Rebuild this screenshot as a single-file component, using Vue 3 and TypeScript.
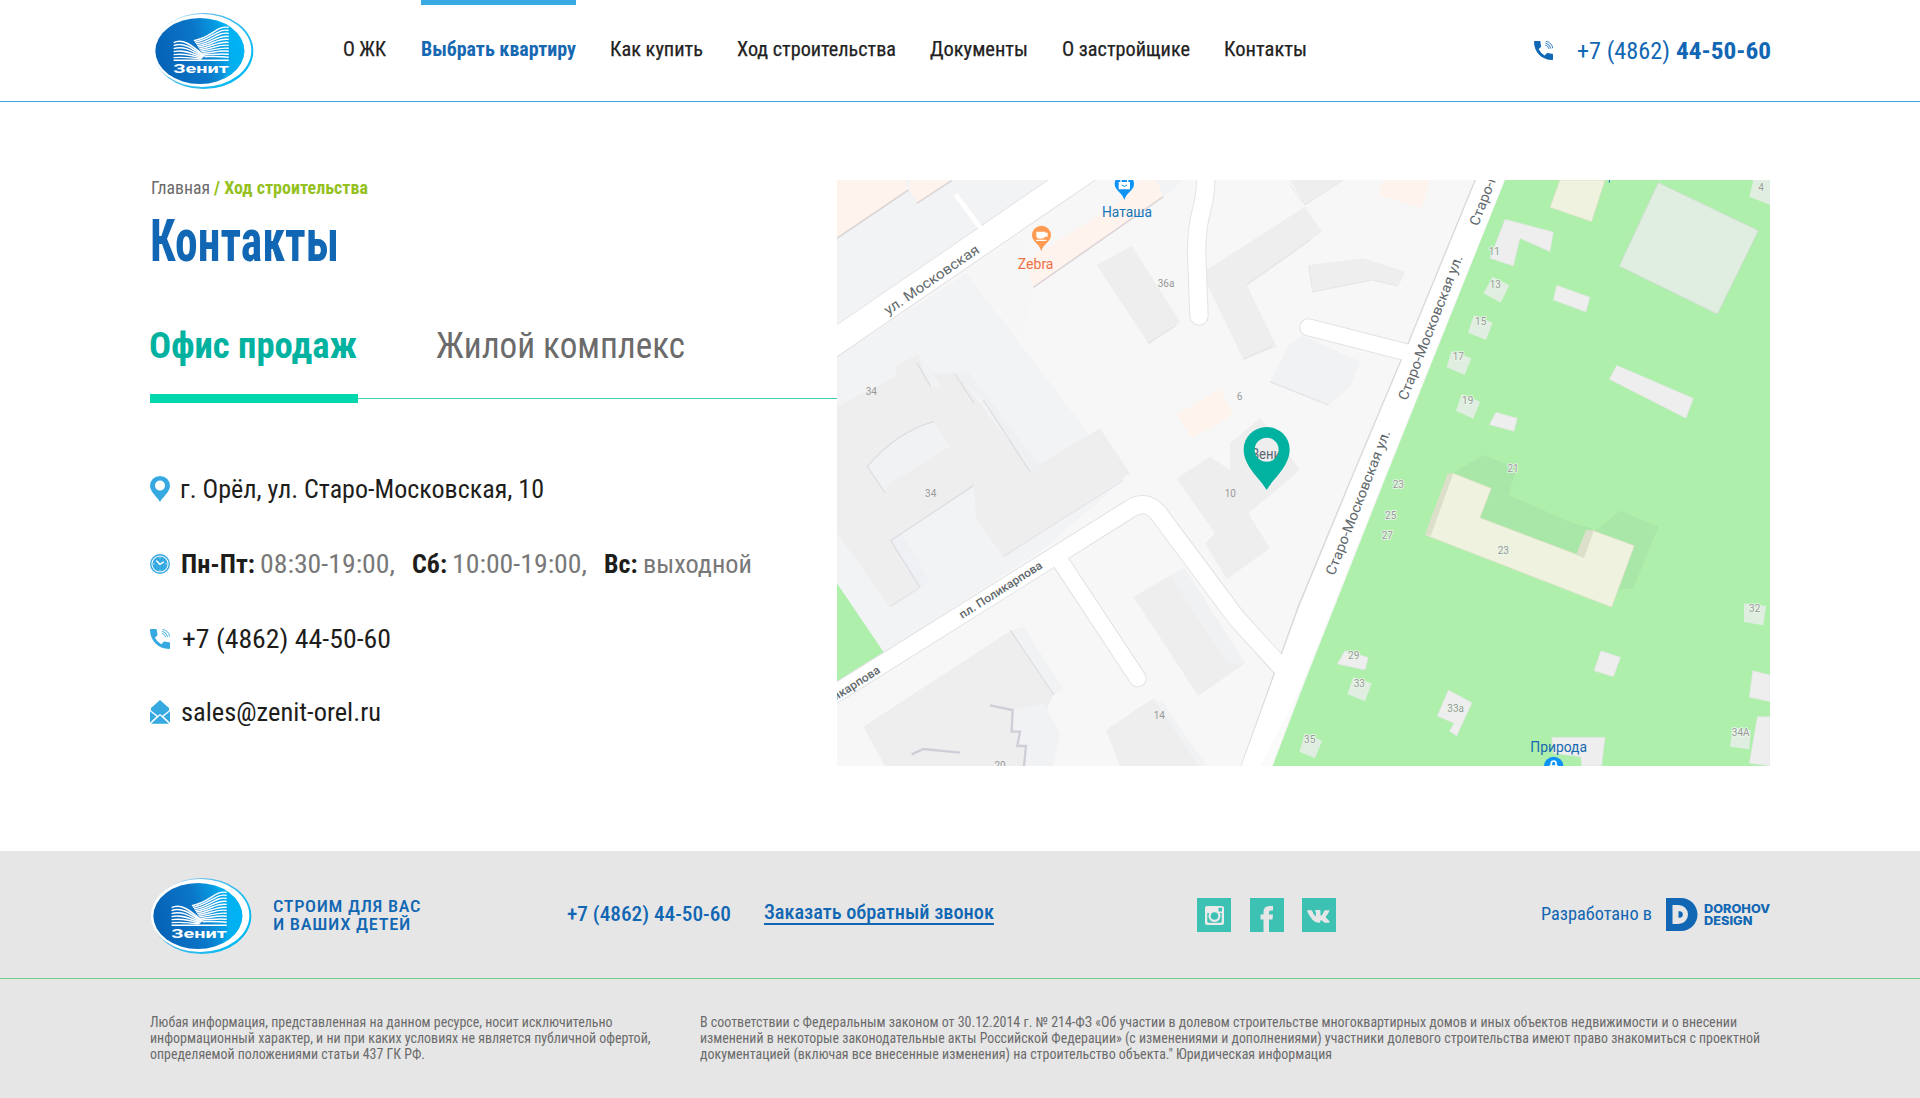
<script setup lang="ts">
import type { DirectiveBinding } from 'vue'

interface Fitted { text: string; width: number }
interface NavItem extends Fitted { active?: boolean }

/** Condenses a single-line label to a fixed advance width without leaving the flow. */
const vFit = {
  mounted(el: HTMLElement, binding: DirectiveBinding<number>) {
    const natural = el.getBoundingClientRect().width
    if (!natural) return
    el.style.transform = `scaleX(${binding.value / natural})`
    el.style.marginRight = `${binding.value - natural}px`
  },
}

const nav: NavItem[] = [
  { text: 'О ЖК', width: 43 },
  { text: 'Выбрать квартиру', width: 155, active: true },
  { text: 'Как купить', width: 93 },
  { text: 'Ход строительства', width: 159 },
  { text: 'Документы', width: 98 },
  { text: 'О застройщике', width: 128 },
  { text: 'Контакты', width: 83 },
]

const hours = [
  { day: 'Пн-Пт:', dw: 74, time: '08:30-19:00,', tw: 135 },
  { day: 'Сб:', dw: 35, time: '10:00-19:00,', tw: 135 },
  { day: 'Вс:', dw: 33.5, time: 'выходной', tw: 109 },
]

const legalLeft: Fitted[] = [
  { text: 'Любая информация, представленная на данном ресурсе, носит исключительно', width: 462.5 },
  { text: 'информационный характер, и ни при каких условиях не является публичной офертой,', width: 500.5 },
  { text: 'определяемой положениями статьи 437 ГК РФ.', width: 275 },
]
const legalRight: Fitted[] = [
  { text: 'В соответствии с Федеральным законом от 30.12.2014 г. № 214-ФЗ «Об участии в долевом строительстве многоквартирных домов и иных объектов недвижимости и о внесении', width: 1037 },
  { text: 'изменений в некоторые законодательные акты Российской Федерации» (с изменениями и дополнениями) участники долевого строительства имеют право знакомиться с проектной', width: 1060 },
  { text: 'документацией (включая все внесенные изменения) на строительство объекта." Юридическая информация', width: 632 },
]

const tower = Array.from({ length: 11 }, (_, i) =>
  `M251 ${67 + i * 9} C${215 + i} ${60 + i * 9.4} 200 ${98 + i * 5.7} ${146 + i * 3.2} ${107 + i * 4.8}`)
const pages = Array.from({ length: 6 }, (_, i) =>
  `M85 ${113 + i * 9} C${112} ${98 + i * 11.6} 140 ${121 + i * 7.4} ${178 - i * 2} ${153 + i * 1.8}`)

interface Mark { x: number; y: number; t: string }
const greyMarks: Mark[] = [
  { x: 1008, y: 350, t: '36a' }, { x: 124, y: 676, t: '34' }, { x: 1229, y: 689, t: '6' },
  { x: 302, y: 982, t: '34' }, { x: 1201, y: 980, t: '10' }, { x: 988, y: 1646, t: '14' },
  { x: 510, y: 1796, t: '20' },
]
const greenMarks: Mark[] = [
  { x: 1993, y: 256, t: '11' }, { x: 1996, y: 353, t: '13' }, { x: 1952, y: 464, t: '15' },
  { x: 1885, y: 571, t: '17' }, { x: 1913, y: 701, t: '19' }, { x: 2049, y: 907, t: '21' },
  { x: 2793, y: 62, t: '4' }, { x: 1705, y: 953, t: '23' }, { x: 1682, y: 1047, t: '25' },
  { x: 1672, y: 1106, t: '27' }, { x: 2020, y: 1151, t: '23' }, { x: 2774, y: 1325, t: '32' },
  { x: 1571, y: 1466, t: '29' }, { x: 1588, y: 1550, t: '33' }, { x: 1877, y: 1625, t: '33a' },
  { x: 1439, y: 1718, t: '35' }, { x: 2732, y: 1697, t: '34A' },
]
</script>

<template>
  <div class="page">
    <!-- shared symbols -->
    <svg class="defs" width="0" height="0" aria-hidden="true">
      <defs>
        <linearGradient id="lgBody" x1="0" y1="0.6" x2="1" y2="0.4">
          <stop offset="0" stop-color="#0561b5" />
          <stop offset="0.5" stop-color="#0b76c8" />
          <stop offset="0.8" stop-color="#05a5e8" />
          <stop offset="1" stop-color="#00b6f4" />
        </linearGradient>
        <linearGradient id="lgRing" x1="0" y1="0" x2="1" y2="0.6">
          <stop offset="0" stop-color="#d8ecfa" />
          <stop offset="0.4" stop-color="#5fbdec" />
          <stop offset="1" stop-color="#00b9f2" />
        </linearGradient>
        <clipPath id="cpBody"><ellipse cx="164" cy="138" rx="134" ry="99" /></clipPath>
        <symbol id="logo" viewBox="20 15 310 240">
          <ellipse cx="175" cy="138" rx="150" ry="114.500" fill="url(#lgRing)" />
          <ellipse cx="171" cy="136.500" rx="148" ry="110" fill="#fff" />
          <ellipse cx="164" cy="138" rx="134" ry="99" fill="url(#lgBody)" />
          <g clip-path="url(#cpBody)">
            <path d="M192 30 C262 75 285 165 215 250 L330 250 L330 25Z" fill="#00b4f2" opacity=".65" />
          </g>
          <g fill="none" stroke="#fff" stroke-width="4.400">
            <path v-for="(d, i) in tower" :key="'t' + i" :d="d" />
            <path v-for="(d, i) in pages" :key="'p' + i" :d="d" />
            <path d="M85 166 H251" />
          </g>
          <text class="logo-word" x="84" y="205" textLength="167" lengthAdjust="spacingAndGlyphs">Зенит</text>
        </symbol>
        <symbol id="phone" viewBox="0 0 20 20">
          <path d="M0.500 0 H6 Q6.800 0 6.800 0.900 Q6.900 3.400 7.500 5.200 Q7.700 5.900 7.200 6.400 L4.900 8.700 Q7.200 12.900 11.200 15.200 L13.500 12.900 Q14 12.400 14.700 12.600 Q16.800 13.200 19.200 13.300 Q20 13.300 20 14.100 V19.200 Q20 20 19.200 20 C8 20 0 11.500 0 0.800Z" fill="currentColor" />
          <path d="M11.800 4.300 Q15 5 15.700 8.300 M12 2.200 Q16.800 3.200 17.800 8 M12.500 0.400 Q18.800 1.500 19.700 7.600" fill="none" stroke="currentColor" stroke-width="0.900" />
        </symbol>
      </defs>
    </svg>

    <header class="header">
      <div class="wrap header-row">
        <svg class="logo"><use href="#logo" /></svg>
        <nav class="nav">
          <a v-for="n in nav" :key="n.text" class="nav-item" :class="{ active: n.active }"><span v-fit="n.width" class="fit">{{ n.text }}</span></a>
        </nav>
        <div class="head-phone">
          <svg width="19" height="19"><use href="#phone" /></svg>
          <span class="head-number"><span v-fit="93" class="fit">+7 (4862)</span><b v-fit="95" class="fit">44-50-60</b></span>
        </div>
      </div>
    </header>

    <main class="wrap main">
      <section class="info">
        <div class="crumbs"><span v-fit="59" class="fit">Главная</span><b v-fit="154" class="fit">/ Ход строительства</b></div>
        <h1><span v-fit="189" class="fit">Контакты</span></h1>
        <div class="tabs">
          <b v-fit="208" class="fit">Офис продаж</b>
          <span v-fit="249" class="fit">Жилой комплекс</span>
        </div>
        <div class="rule"><i class="rule-bar" /><i class="rule-line" /></div>

        <ul class="contacts">
          <li>
            <svg width="20" height="26" viewBox="0 0 20 26"><path fill="currentColor" fill-rule="evenodd" d="M10 26 C8.500 22.500 0 16 0 9.800 A10 9.800 0 0 1 20 9.800 C20 16 11.500 22.500 10 26Z M10 4.600 A5 5 0 1 0 10 14.600 A5 5 0 1 0 10 4.600Z" /></svg>
            <span v-fit="364" class="fit">г. Орёл, ул. Старо-Московская, 10</span>
          </li>
          <li>
            <svg width="20" height="20" viewBox="0 0 20 20">
              <circle cx="10" cy="10" r="9.300" fill="#fff" stroke="currentColor" stroke-width="1.400" />
              <circle cx="10" cy="10" r="7.600" fill="currentColor" />
              <path d="M6.300 6.500 L9.800 10.300 L13.800 7.800" fill="none" stroke="#fff" stroke-width="1.400" />
              <path d="M10 3.300v1.200 M10 15.500v1.200 M3.300 10h1.200 M15.500 10h1.200" stroke="#fff" stroke-width=".8" />
            </svg>
            <span class="hours">
              <span v-for="h in hours" :key="h.day" class="hour"><b v-fit="h.dw" class="fit">{{ h.day }}</b><span v-fit="h.tw" class="fit">{{ h.time }}</span></span>
            </span>
          </li>
          <li class="tel">
            <svg width="20" height="20"><use href="#phone" /></svg>
            <span v-fit="209" class="fit">+7 (4862) 44-50-60</span>
          </li>
          <li class="mail">
            <svg width="20" height="24" viewBox="0 0 20 24" fill="currentColor">
              <path d="M10 0 L19 8 L19 10.500 L12.300 15.800 L10 14 L7.700 15.800 L1 10.500 V8Z" />
              <path d="M0 11.300 L6.400 16.500 L0 22.700Z M20 11.300 L13.600 16.500 L20 22.700Z M1 23.800 L10 15.400 L19 23.800Z" />
            </svg>
            <span v-fit="200" class="fit">sales@zenit-orel.ru</span>
          </li>
        </ul>
      </section>

      <svg class="map" viewBox="21 30 2799 1758" preserveAspectRatio="none">
        <rect x="0" y="0" width="2840" height="1800" fill="#f7f7f7" />
        <!-- quarters -->
        <g fill="#f2f3f5">
          <path d="M21 30H655L21 465Z" />
          <path d="M21 560L410 310L760 770L880 930L650 1130L160 1450L21 1240Z" />
          <path d="M975 30H1060L1000 80Z" />
        </g>
        <path d="M410 310L600 190L570 280L610 352L580 500Z" fill="#f6f6f7" />
        <path d="M21 1240L163 1450L21 1540Z" fill="#aeefac" />
        <!-- cafes and shops -->
        <g fill="#fff4ed">
          <path d="M21 30H225L235 62L21 200Z" /><path d="M235 30H360L262 98L240 60Z" />
          <path d="M585 275L870 95L930 30H980L1000 80L610 352Z" />
          <path d="M1660 30H1800L1775 115L1645 75Z" /><path d="M1040 735L1170 655L1210 735L1085 805Z" />
        </g>
        <path d="M21 205L235 60M260 100L365 32M610 352L1000 80" stroke="#ddd5d8" stroke-width="5" fill="none" />
        <!-- buildings -->
        <g fill="#eeeeee">
          <path d="M800 285L905 228L1050 455L955 520Z" />
          <path d="M1130 300L1425 110L1475 185L1250 345L1340 530L1240 568L1130 340Z" />
          <path d="M1380 30H1540L1425 105Z" />
          <path d="M1436 285L1600 265L1726 305L1705 348L1625 330L1448 366Z" />
          <path d="M21 710L195 620L200 585L265 555L310 610L380 610L610 910L430 950L180 1112L270 1252L180 1310L21 1090Z" />
          <path d="M600 900L810 775L900 910L520 1160L440 1050L430 945Z" />
          <path d="M1200 820L1290 745L1350 820L1410 900L1255 1030L1320 1135L1190 1228L1125 1120L1155 1090L1040 925L1140 860L1200 900Z" />
          <path d="M910 1280L1060 1195L1245 1480L1105 1578Z" />
          <path d="M828 1680L970 1585L1110 1788H870Z" />
          <path d="M100 1670L545 1380L670 1575L640 1640L590 1788H165Z" />
        </g>
        <g fill="#f1f2f4">
          <path d="M1380 520L1420 498L1590 575L1560 650L1495 705L1320 635Z" />
          <path d="M112 890Q200 790 312 755L360 830L180 940L165 968Z" />
          <path d="M265 560L310 610L335 650L300 650Z" />
          <path d="M375 612L410 600L640 900L600 905L460 690Z" fill="#eff0f2" />
          <path d="M545 1380L580 1370L700 1555L672 1575Z" />
          <path d="M548 1620L640 1600L690 1690L670 1788H585L588 1728L562 1728L570 1685L545 1685Z" />
          <path d="M1020 1215L1065 1195L1245 1480L1190 1480Z" fill="#f0f1f3" />
          <path d="M975 1590L1000 1600L1130 1788H1105Z" />
          <path d="M182 1112L215 1092L300 1235L270 1252Z" fill="#eff0f3" />
        </g>
        <g fill="none" stroke="#dddee3" stroke-width="4">
          <path d="M165 968L112 890Q200 785 312 755M262 580L302 650M375 612L432 700M460 690L600 905" />
          <path d="M430 947L182 1112L270 1252M542 1382L672 1575" />
          <path d="M270 1252L180 1310M520 1160L880 930M955 520L1040 465M1250 345L1440 210M1240 568L1325 530M1320 635L1495 705" stroke="#e4e4e8" />
          <path d="M480 1606L548 1620L545 1685L570 1685L562 1728L588 1728L582 1788M245 1753L280 1737L390 1748" stroke="#cfced8" stroke-width="7" />
        </g>
        <path d="M1380 45L1425 105L1540 30M1436 285L1448 366L1625 330L1705 348" fill="none" stroke="#e6e6e6" stroke-width="3" />
        <!-- park side -->
        <path d="M2025 30H2820V1788H1328L1410 1572L1660 940Z" fill="#aeefac" />
        <path d="M1850 920L1960 855L2060 895L2035 975L2230 1060L2300 1080L2370 1022L2485 1070L2410 1255L2345 1260L2250 1158L1950 1045Z" fill="#a8e7a7" />
        <g fill="#eeeeee" stroke="#dce6dc" stroke-width="2">
          <path d="M2025 148L2170 186L2160 245L2070 205L2050 288L1980 265Z" />
          <path d="M2180 346L2280 382L2268 426L2170 390Z" /><path d="M2360 586L2590 685L2568 745L2338 628Z" />
          <path d="M1998 727L2062 745L2052 784L1978 764Z" />
          <path d="M1545 1442L1615 1462L1605 1500L1522 1482Z" />
          <path d="M1855 1560L1926 1598L1880 1698L1858 1683L1872 1660L1822 1638Z" />
          <path d="M2313 1442L2372 1462L2350 1520L2292 1502Z" />
          <path d="M2768 1502L2820 1515V1595L2758 1582Z" /><path d="M2782 1640H2820V1788L2758 1780Z" />
          <path d="M2165 1702H2325L2315 1788H2255L2252 1760L2170 1750Z" />
        </g>
        <g fill="#dfeee0">
          <path d="M2485 38L2785 182L2662 432L2368 288Z" stroke="#d2dfd3" stroke-width="3" />
          <path d="M1988 320L2038 346L2012 398L1960 370Z" /><path d="M1932 435L1988 458L1968 510L1914 488Z" />
          <path d="M1865 542L1924 565L1904 615L1850 592Z" /><path d="M1895 672L1950 695L1930 746L1878 722Z" />
          <path d="M2770 30H2820V105L2758 80Z" />
          <path d="M2742 1300L2808 1308L2800 1366L2742 1356Z" /><path d="M1570 1522L1625 1540L1605 1594L1552 1572Z" />
          <path d="M1425 1690L1476 1712L1455 1765L1408 1745Z" /><path d="M2708 1672L2762 1680L2758 1738L2700 1730Z" />
        </g>
        <g fill="#eef2de">
          <path d="M2190 30H2325L2285 155L2160 112Z" stroke="#dedfc8" stroke-width="2" />
          <path d="M1870 910L1984 955L1950 1043L2258 1160L2285 1080L2413 1127L2345 1312L1788 1096L1855 915Z" stroke="#dcdfc6" stroke-width="2" />
        </g>
        <path d="M1870 910L1802 1098L1785 1094L1852 912ZM2268 1080H2292L2262 1164L2238 1155Z" fill="#dcdfc9" />
        <path d="M2338 28V38" stroke="#1678c0" stroke-width="3" />
        <!-- streets -->
        <g fill="none" stroke-linecap="round" stroke-linejoin="round">
          <g stroke="#e2e3e5" stroke-width="58">
            <path d="M1127 0C1130 130 1100 110 1100 250L1107 438" />
            <path d="M1435 472L1740 550" stroke-width="54" />
            <path d="M-10 1587L900 1017Q948 985 985 1030L1220 1345L1360 1500" />
            <path d="M682 1160L923 1525" stroke-width="54" />
          </g>
          <path d="M1940 20L1735 520L1575 900L1405 1310L1232 1795" stroke="#d8dadc" stroke-width="5" />
          <path d="M21 465L655 30M21 560L795 30" stroke="#e4e4e7" stroke-width="4" />
          <g stroke="#fff" stroke-width="52">
            <path d="M1127 0C1130 130 1100 110 1100 250L1107 438" />
            <path d="M1435 472L1760 555" stroke-width="48" />
            <path d="M-10 1587L900 1017Q948 985 985 1030L1220 1345L1380 1520" />
            <path d="M682 1160L923 1525" stroke-width="48" />
            <path d="M380 78L460 185" stroke-width="14" />
          </g>
        </g>
        <g fill="#fff">
          <path d="M21 466L657 30H793L21 558Z" />
          <path d="M1938 30H2023L1660 930L1410 1558L1306 1788H1234L1408 1310L1577 900L1737 520Z" />
          <path d="M1410 1558L1325 1788H1290Z" fill="#fbfbfb" />
        </g>

        <g class="street">
          <text transform="translate(174 436) rotate(-34.500)" textLength="336" lengthAdjust="spacingAndGlyphs">ул. Московская</text>
          <text transform="translate(1730 694) rotate(-68.700)" textLength="464" lengthAdjust="spacingAndGlyphs">Старо-Московская ул.</text>
          <text transform="translate(1513 1219) rotate(-68.700)" textLength="464" lengthAdjust="spacingAndGlyphs">Старо-Московская ул.</text>
          <text transform="translate(1944 170) rotate(-68.700)" textLength="464" lengthAdjust="spacingAndGlyphs">Старо-Московская ул.</text>
          <g class="lane">
            <text transform="translate(397 1347) rotate(-32.500)" textLength="288" lengthAdjust="spacingAndGlyphs">пл. Поликарпова</text>
            <text transform="translate(-90 1661) rotate(-32.500)" textLength="288" lengthAdjust="spacingAndGlyphs">пл. Поликарпова</text>
          </g>
        </g>
        <g class="mark"><text v-for="m in greyMarks" :key="m.x + m.t" :x="m.x" :y="m.y">{{ m.t }}</text></g>
        <g class="mark halo"><text v-for="m in greenMarks" :key="m.x + m.t" :x="m.x" :y="m.y">{{ m.t }}</text></g>

        <!-- places -->
        <g class="place">
          <path d="M883 90C878 68 854 62 854 42A29 29 0 0 1 912 42C912 62 888 68 883 90Z" fill="#0d92f5" />
          <path d="M868 38H898V56H868ZM873 30V38M893 30V38" fill="#fff" stroke="#fff" stroke-width="4" />
          <path d="M875 45Q883 54 891 45" fill="none" stroke="#0d92f5" stroke-width="3" />
          <text x="891" y="141" textLength="150" lengthAdjust="spacingAndGlyphs" fill="#1375b8">Наташа</text>
          <path d="M634 244C629 222 606 216 606 196A28.500 28.500 0 0 1 663 196C663 216 639 222 634 244Z" fill="#ff9a52" />
          <path d="M619 185H646V188H653V200H645Q642 206 632 206Q619 206 619 198ZM618 209H649V213H618Z" fill="#fff" />
          <text x="617" y="297" textLength="107" lengthAdjust="spacingAndGlyphs" fill="#ee7048">Zebra</text>
          <text x="2186" y="1746" textLength="170" lengthAdjust="spacingAndGlyphs" fill="#1569ae">Природа</text>
          <circle cx="2171" cy="1789" r="29" fill="#0d92f5" />
          <path d="M2164 1790V1780A7 7 0 0 1 2178 1780V1790M2158 1788H2184" fill="none" stroke="#fff" stroke-width="5" />
        </g>
        <text x="1264" y="868" class="zenit" textLength="108" lengthAdjust="spacingAndGlyphs">Зенит</text>
        <path d="M1310 960C1290 925 1241 890 1241 838A69 67 0 0 1 1379 838C1379 890 1330 925 1310 960ZM1310 803A36 36 0 1 0 1310 875A36 36 0 1 0 1310 803Z" fill="#00b29f" fill-rule="evenodd" />
      </svg>
    </main>

    <footer class="footer">
      <div class="wrap foot-row">
        <svg class="logo"><use href="#logo" /></svg>
        <div class="slogan"><span v-fit="148" class="fit">СТРОИМ ДЛЯ ВАС</span><span v-fit="138" class="fit">И ВАШИХ ДЕТЕЙ</span></div>
        <span class="foot-phone"><span v-fit="164" class="fit">+7 (4862) 44-50-60</span></span>
        <a class="callback"><span v-fit="230" class="fit">Заказать обратный звонок</span></a>
        <div class="social">
          <svg viewBox="0 0 34 34">
            <rect width="34" height="34" fill="#3dc1b3" />
            <path fill="#ebebeb" fill-rule="evenodd" d="M10 8H25Q27 8 27 10V25Q27 27 25 27H10Q8 27 8 25V10Q8 8 10 8ZM10.300 15V23.500Q10.300 24.700 11.500 24.700H23.500Q24.700 24.700 24.700 23.500V15H22.700A6 6 0 1 1 12.300 15ZM21.500 9.800V13.500H25V9.800ZM17.500 14.200A3.800 3.800 0 1 0 17.500 21.800A3.800 3.800 0 1 0 17.500 14.200Z" />
          </svg>
          <svg viewBox="0 0 34 34">
            <rect width="34" height="34" fill="#3dc1b3" />
            <path fill="#e6e6e6" d="M13.500 34V21.500H10.500V16.500H13.500V14Q13.500 8 19.500 8H23V12.500H20.700Q19 12.500 19 14.200V16.500H23L22.500 21.500H19V34Z" />
          </svg>
          <svg viewBox="0 0 34 34">
            <rect width="34" height="34" fill="#3dc1b3" />
            <path fill="#e6e6e6" d="M5.500 12.200H9.300Q10 12.200 10.300 13Q11.700 16.700 13.200 18.200Q13.900 18.600 13.900 17.500V14.600Q13.800 13.200 12.600 12.900Q13.200 12 14.500 12H17.500Q18.500 12 18.500 13.300V17.200Q18.800 18.200 19.500 17.500Q21 15.800 22 13.200Q22.300 12.200 23.200 12.200H26.700Q27.700 12.200 27.300 13.300Q26.500 15.300 23.800 18.500Q23.400 19 24 19.700Q26.500 21.800 27.500 23.500Q28 24.700 26.700 24.800H23.200Q22.200 24.800 21.300 23.700Q19.800 21.900 19.100 21.900Q18.500 21.900 18.500 23Q18.500 24.500 17.300 24.800Q13.500 25.200 10.500 21.800Q7.700 18.700 5.200 13.300Q4.900 12.200 5.500 12.200Z" />
          </svg>
        </div>
        <div class="credit">
          <span v-fit="111" class="fit">Разработано в</span>
          <svg width="32" height="33" viewBox="0 0 32 33" fill="#1167b3" fill-rule="evenodd"><path d="M0 0H15A16.500 16.500 0 0 1 15 33H0ZM6.500 7V26H12.500A9.500 9.500 0 0 0 12.500 7Z" /><path d="M12.500 13.200H13.500A3.300 3.300 0 0 1 13.500 19.800H12.500Z" /></svg>
          <div class="studio"><span v-fit="66" class="fit">DOROHOV</span><span v-fit="48.5" class="fit">DESIGN</span></div>
        </div>
      </div>
      <div class="foot-line" />
      <div class="wrap legal">
        <p class="legal-left"><span v-for="l in legalLeft" :key="l.text" v-fit="l.width" class="fit">{{ l.text }}</span></p>
        <p><span v-for="l in legalRight" :key="l.text" v-fit="l.width" class="fit">{{ l.text }}</span></p>
      </div>
    </footer>
  </div>
</template>

<style>
html, body { margin: 0; background: #fff; }
</style>

<style scoped>
.page {
  width: 1920px;
  height: 1098px;
  overflow: hidden;
  display: flex;
  flex-direction: column;
  background: #fff;
  color: #1d1d1b;
  font-family: 'Roboto Condensed', Roboto, 'Liberation Sans', sans-serif;
}
.defs { position: absolute; }
.wrap { width: 1620px; margin: 0 auto; }
.fit { display: inline-block; flex: none; white-space: nowrap; transform-origin: 0 50%; }
.logo { width: 103px; height: 80px; flex: none; }
.logo-word { font: 700 39px Roboto, sans-serif; fill: #fff; }

.header { height: 101px; border-bottom: 1px solid #3ca6dc; }
.header-row { display: flex; }
.header-row .logo { margin: 10px 0 0 2px; }
.nav { display: flex; gap: 34px; margin-left: 88px; font-size: 21px; line-height: 98px; }
.nav-item { display: flex; color: #222; -webkit-text-stroke: 0.25px #222; }
.nav-item:first-child { margin-right: 1px; }
.nav-item.active { color: #1668b3; font-weight: 700; -webkit-text-stroke: 0; box-shadow: inset 0 5px #39a9e1; }
.head-phone { display: flex; align-items: center; gap: 24px; margin-left: auto; color: #1167b3; height: 101px; }
.head-number { display: flex; gap: 6px; font-size: 24.500px; line-height: 101px; margin-right: -1px; }

.main { display: flex; height: 671px; padding-top: 78px; }
.info { width: 687px; }
.crumbs { display: flex; gap: 4px; padding-left: 1px; font-size: 18px; line-height: 16px; color: #6b6b6b; }
.crumbs b { color: #95c11f; }
h1 { display: flex; margin: 15px 0 0; font-size: 59px; line-height: 60px; font-weight: 700; color: #1167b3; }
.tabs { display: flex; gap: 79px; margin: 45px 0 0 -1px; padding-bottom: 18px; font-size: 36px; line-height: 60px; color: #6b6b6b; }
.tabs b { color: #00b29f; }
.rule { display: flex; align-items: center; }
.rule-bar { width: 208px; height: 9px; background: #00d7ac; }
.rule-line { flex: 1; height: 1px; background: #45cdb2; }
.contacts { list-style: none; margin: 66px 0 0; padding: 0; display: flex; flex-direction: column; gap: 35px; font-size: 26px; line-height: 40px; }
.contacts li { display: flex; align-items: center; gap: 11px; height: 40px; }
.contacts li:first-child { gap: 10px; }
.contacts .tel { gap: 12px; }
.contacts svg { color: #36a9e1; flex: none; }
.mail { margin-top: -2px; }
.hours { display: flex; gap: 17px; color: #787878; }
.hour { display: flex; gap: 5px; }
.hour b { color: #1d1d1b; }

.map { width: 933px; height: 586px; display: block; font-family: Roboto, 'Liberation Sans', sans-serif; }
.street { font-size: 42px; fill: #5f686c; }
.lane { font-size: 35px; font-weight: 500; }
.mark { font-size: 30px; fill: #999; text-anchor: middle; }
.halo { stroke: #e9f6e9; stroke-width: 5px; paint-order: stroke; }
.place { font-size: 42px; text-anchor: middle; }
.zenit { font-size: 42px; fill: #5b6670; }

.footer { flex: 1; background: #e6e6e6; }
.foot-row { display: flex; align-items: center; height: 127px; color: #1167b3; }
.slogan { display: flex; flex-direction: column; align-items: flex-start; margin: 3px 0 0 20px; font-size: 16.500px; line-height: 18px; font-weight: 500; letter-spacing: 0.6px; width: 148px; }
.foot-phone { display: flex; margin: -1px 0 0 146px; font-size: 20.500px; line-height: 24px; font-weight: 500; width: 164px; }
.callback { display: flex; margin: -2px 0 0 33px; font-size: 20.500px; line-height: 21px; font-weight: 500; width: 230px; border-bottom: 2px solid #1167b3; }
.social { display: flex; gap: 18.500px; margin-left: 203px; }
.social svg { width: 34px; height: 34px; display: block; }
.credit { display: flex; align-items: center; margin-left: auto; font-size: 18.500px; line-height: 24px; }
.credit > span { margin-top: -2px; }
.credit > svg { margin: 0 6px 0 14px; }
.studio { display: flex; flex-direction: column; align-items: flex-start; width: 66px; font: 800 11.500px/12.500px Inter, sans-serif; margin-top: 1px; }
.foot-line { height: 1px; background: #6fcf8c; }
.legal { display: flex; padding-top: 35px; font-size: 14px; line-height: 16px; color: #6b6b6b; }
.legal p { margin: 0; display: flex; flex-direction: column; align-items: flex-start; }
.legal .legal-left { width: 550px; flex: none; }
</style>
